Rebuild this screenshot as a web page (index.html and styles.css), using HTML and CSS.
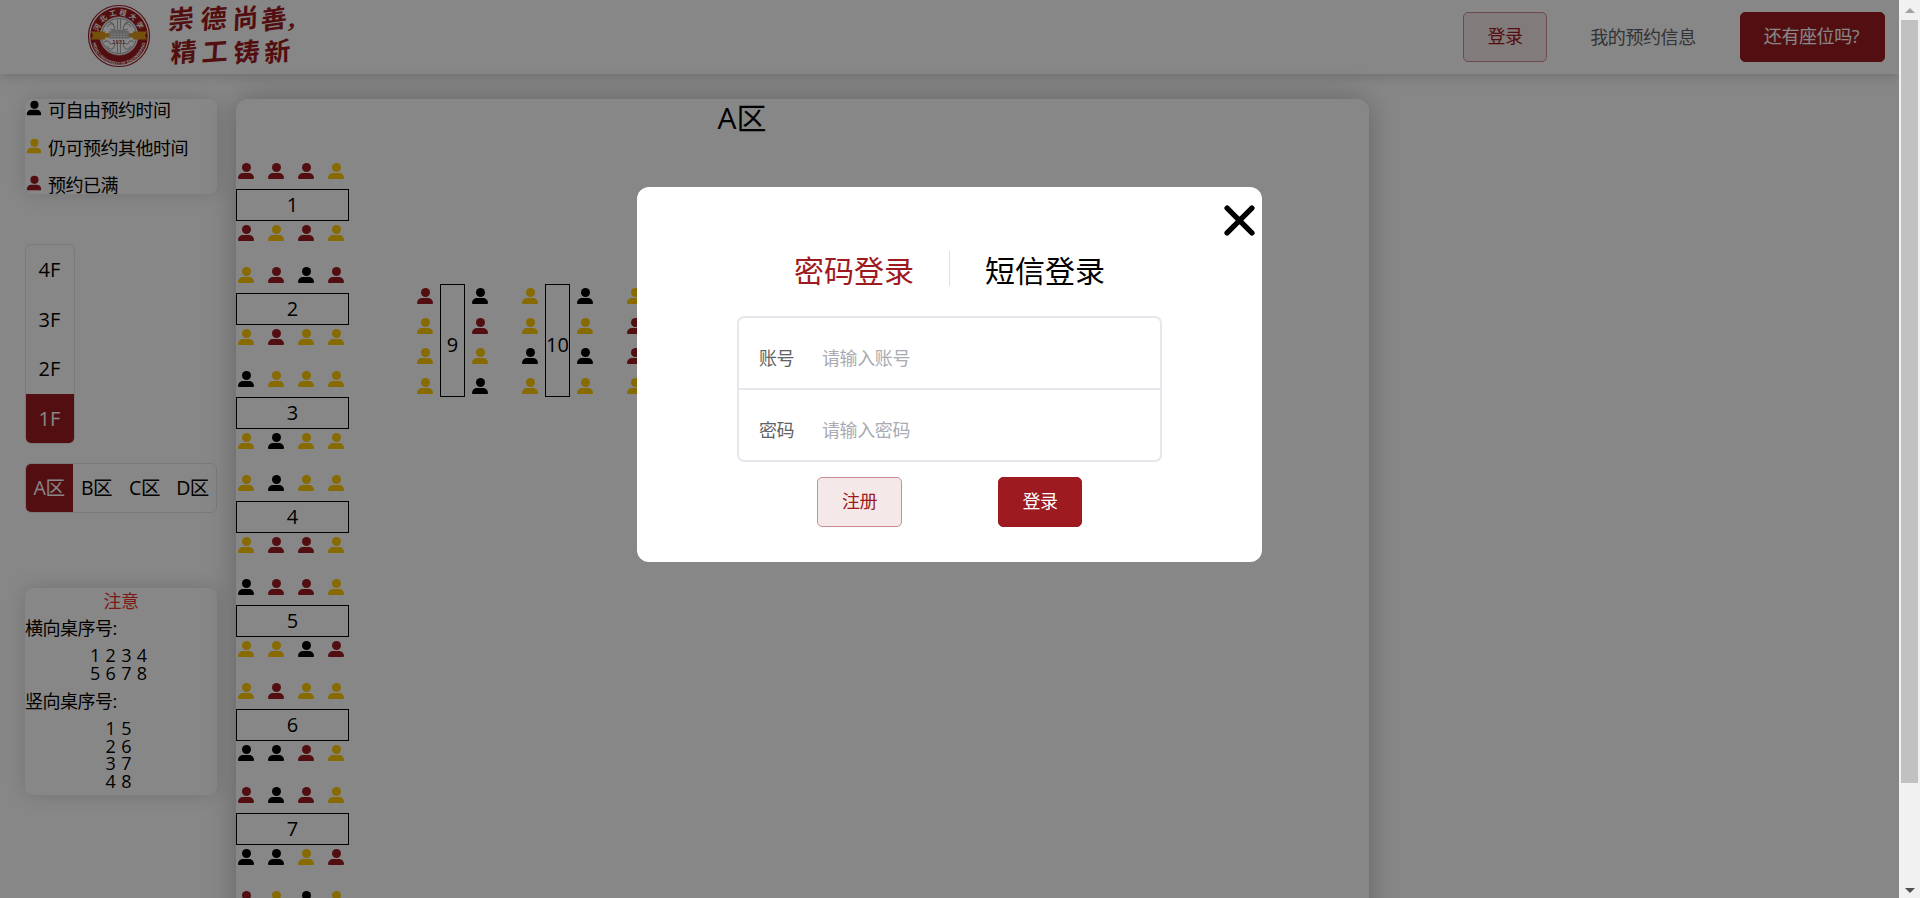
FILE: index.html
```html
<!DOCTYPE html>
<html lang="zh-CN">
<head>
<meta charset="utf-8">
<title>图书馆座位预约</title>
<link rel="stylesheet" href="styles.css">
</head>
<body>
<div class="app">
<div class="page">
  <header class="header">
    <svg class="seal" viewBox="0 0 64 64">
      <defs>
        <path id="arc-top" d="M11 32a21 21 0 0 1 42 0"/>
        <path id="arc-bottom" d="M5.300 34a26.700 26.700 0 0 0 53.400 0"/>
      </defs>
      <circle cx="32" cy="32" r="30.500" fill="#fff" stroke="#9d1b20" stroke-width="1.200"/>
      <circle cx="32" cy="32" r="28.800" fill="#9d1b20"/>
      <circle cx="32" cy="32" r="19" fill="#fff" stroke="#ddd" stroke-width=".8"/>
      <g fill="none" stroke="#aaa" stroke-width="1.100">
        <circle cx="32" cy="32" r="17.500"/>
        <path d="M30.500 15v10M33.500 15v10M30.500 40v9M33.500 40v9M20 23q4-6 7-1t-4 3M44 23q-4-6-7-1t4 3M20 42q4 6 7 1t-4-3M44 42q-4 6-7 1t4-3M17 38q5-3 6 2M47 38q-5-3-6 2M22 18q4 0 5 4M42 18q-4 0-5 4"/>
      </g>
      <path d="M4 27.500h14v1.800h28v-1.800h14l-2 4 2 4H46v-2H18v2H4l2-4z" fill="#d9991a"/>
      <path d="M22 27.500q10-4 20 0v7H22z" fill="#bbb"/>
      <path d="M24 30h16M24 32.500h16" stroke="#fff" stroke-width=".8" stroke-dasharray="2 1"/>
      <text x="32" y="39.500" class="seal-year">1931</text>
      <text class="seal-cn"><textPath href="#arc-top" startOffset="50%">河北工程大学</textPath></text>
      <text class="seal-en"><textPath href="#arc-bottom" startOffset="50%">HEBEI UNIVERSITY OF ENGINEERING</textPath></text>
    </svg>
    <svg class="motto" viewBox="0 0 140 74">
      <g transform="skewX(-8)">
        <text transform="translate(7 30) rotate(-6)">崇</text>
        <text transform="translate(39 29) rotate(-4)">德</text>
        <text transform="translate(71 29) rotate(-6)">尚</text>
        <text transform="translate(100 30) rotate(-8)">善</text>
        <text x="127" y="27">,</text>
        <text transform="translate(14 63) rotate(-6)">精</text>
        <text transform="translate(45 62) rotate(-4)">工</text>
        <text transform="translate(77 63) rotate(-6)">铸</text>
        <text transform="translate(108 63) rotate(-8)">新</text>
      </g>
    </svg>
    <nav class="nav">
      <a class="btn plain">登录</a>
      <a class="link">我的预约信息</a>
      <a class="btn solid">还有座位吗?</a>
    </nav>
  </header>
  <div class="content">
    <aside class="side">
      <div class="card legend">
        <div><i class="seat b"></i>可自由预约时间</div>
        <div><i class="seat y"></i>仍可预约其他时间</div>
        <div><i class="seat r"></i>预约已满</div>
      </div>
      <div class="floors"><a>4F</a><a>3F</a><a>2F</a><a class="on">1F</a></div>
      <div class="areas"><a class="on">A区</a><a>B区</a><a>C区</a><a>D区</a></div>
      <div class="card notice">
        <h4>注意</h4>
        <p>横向桌序号:</p>
        <div class="nums">1 2 3 4<br>5 6 7 8</div>
        <p>竖向桌序号:</p>
        <div class="nums">1 5<br>2 6<br>3 7<br>4 8</div>
      </div>
    </aside>
    <main class="map">
      <h2>A区</h2>
      <div class="tables">
        <div class="across">
          <section class="desk"><div class="row"><i class="seat r"></i><i class="seat r"></i><i class="seat r"></i><i class="seat y"></i></div><b>1</b><div class="row"><i class="seat r"></i><i class="seat y"></i><i class="seat r"></i><i class="seat y"></i></div></section>
          <section class="desk"><div class="row"><i class="seat y"></i><i class="seat r"></i><i class="seat b"></i><i class="seat r"></i></div><b>2</b><div class="row"><i class="seat y"></i><i class="seat r"></i><i class="seat y"></i><i class="seat y"></i></div></section>
          <section class="desk"><div class="row"><i class="seat b"></i><i class="seat y"></i><i class="seat y"></i><i class="seat y"></i></div><b>3</b><div class="row"><i class="seat y"></i><i class="seat b"></i><i class="seat y"></i><i class="seat y"></i></div></section>
          <section class="desk"><div class="row"><i class="seat y"></i><i class="seat b"></i><i class="seat y"></i><i class="seat y"></i></div><b>4</b><div class="row"><i class="seat y"></i><i class="seat r"></i><i class="seat r"></i><i class="seat y"></i></div></section>
          <section class="desk"><div class="row"><i class="seat b"></i><i class="seat r"></i><i class="seat r"></i><i class="seat y"></i></div><b>5</b><div class="row"><i class="seat y"></i><i class="seat y"></i><i class="seat b"></i><i class="seat r"></i></div></section>
          <section class="desk"><div class="row"><i class="seat y"></i><i class="seat r"></i><i class="seat y"></i><i class="seat y"></i></div><b>6</b><div class="row"><i class="seat b"></i><i class="seat b"></i><i class="seat r"></i><i class="seat y"></i></div></section>
          <section class="desk"><div class="row"><i class="seat r"></i><i class="seat b"></i><i class="seat r"></i><i class="seat y"></i></div><b>7</b><div class="row"><i class="seat b"></i><i class="seat b"></i><i class="seat y"></i><i class="seat r"></i></div></section>
          <section class="desk"><div class="row"><i class="seat r"></i><i class="seat y"></i><i class="seat b"></i><i class="seat y"></i></div></section>
        </div>
        <div class="down">
          <section class="desk"><div class="row"><i class="seat r"></i><i class="seat y"></i><i class="seat y"></i><i class="seat y"></i></div><b>9</b><div class="row"><i class="seat b"></i><i class="seat r"></i><i class="seat y"></i><i class="seat b"></i></div></section>
          <section class="desk"><div class="row"><i class="seat y"></i><i class="seat y"></i><i class="seat b"></i><i class="seat y"></i></div><b>10</b><div class="row"><i class="seat b"></i><i class="seat y"></i><i class="seat b"></i><i class="seat y"></i></div></section>
          <section class="desk"><div class="row"><i class="seat y"></i><i class="seat r"></i><i class="seat r"></i><i class="seat y"></i></div></section>
        </div>
      </div>
    </main>
  </div>
  <div class="mask">
    <div class="dialog">
      <svg class="close" viewBox="0 0 30 30"><path d="M3 3l24 24M27 3L3 27"/></svg>
      <div class="tabs"><span class="on">密码登录</span><i></i><span>短信登录</span></div>
      <div class="form">
        <div class="field"><label>账号</label><span>请输入账号</span></div>
        <div class="field"><label>密码</label><span>请输入密码</span></div>
      </div>
      <div class="actions"><a class="btn plain">注册</a><a class="btn solid">登录</a></div>
    </div>
  </div>
</div>
<div class="scrollbar"><i class="up"></i><div class="thumb"></div><i class="dn"></i></div>
</div>
</body>
</html>
```
FILE: styles.css
```css
* { box-sizing: border-box; }
body { margin: 0; font: 18px/24px "Open Sans", "Noto Sans CJK SC", sans-serif; color: #000; overflow: hidden; }
h2, h4, p { margin: 0; font-weight: 400; }
.app { display: flex; height: 898px; }
.page { position: relative; width: 1899px; height: 898px; overflow: hidden; background: #fff; }
.header { display: flex; align-items: center; height: 74px; padding: 0 14px 0 87px; box-shadow: 0 0 14px rgba(0,0,0,.25); }
.seal { width: 64px; height: 64px; margin-top: -2px; }
.seal text { text-anchor: middle; font-family: "Liberation Sans", "Noto Sans CJK SC", sans-serif; }
.seal .seal-year { font-size: 5px; font-weight: 700; fill: #9d1b20; letter-spacing: .5px; }
.seal .seal-cn { font-size: 7px; font-weight: 700; fill: #fff; letter-spacing: 2.500px; }
.seal .seal-en { font-size: 4px; font-weight: 700; fill: #fff; }
.motto { width: 140px; height: 74px; margin-left: 14px; fill: #9d1b20; font: 700 26px "Liberation Serif", "Noto Sans CJK SC", serif; }
.nav { display: flex; align-items: center; margin-left: auto; letter-spacing: -.4px; }
.btn { height: 50px; padding: 0 22px; border: 1px solid #9d1b20; border-radius: 5px; line-height: 47px; text-align: center; white-space: nowrap; letter-spacing: -.4px; }
.plain { width: 84px; color: #9d1b20; background: #f5e8e9; border-color: #ce8d90; }
.solid { color: #fff; background: #9d1b20; }
.nav .solid { width: 145px; padding: 0 2px 0 0; }
.link { width: 193px; padding-right: 1px; text-align: center; color: #606266; }
.content { display: flex; gap: 19px; padding: 25px 0 0 25px; }
.side { width: 192px; }
.card { border-radius: 8px; background: #fff; box-shadow: 0 0 20px rgba(0,0,0,.16); }
.legend { height: 95px; letter-spacing: -.5px; }
.legend div { display: flex; height: 37.500px; line-height: 23px; white-space: nowrap; }
.legend .seat { margin: 1px 6px 0 1px; transform: scale(.9); }
.seat { position: relative; flex: none; display: block; width: 16px; height: 16px; }
.seat::before { content: ""; display: block; width: 9px; height: 9px; margin: 0 auto; border-radius: 50%; background: currentColor; }
.seat::after { content: ""; display: block; width: 16px; height: 6px; margin-top: 1px; border-radius: 5px 5px 1px 1px; background: currentColor; }
.b { color: #000; }
.r { color: #9d1b20; }
.y { color: #ffc800; }
.floors { width: 50px; height: 200px; margin-top: 50px; border: 1px solid #e4e7ed; border-radius: 6px; overflow: hidden; font-size: 20px; }
.floors a { display: block; height: 49.500px; padding-right: 1px; line-height: 49px; text-align: center; }
.areas { display: grid; grid-template-columns: 47px repeat(3, 48px); height: 50px; margin-top: 19px; border: 1px solid #e4e7ed; border-radius: 6px; overflow: hidden; font-size: 19.500px; line-height: 48px; text-align: center; letter-spacing: -.5px; }
.areas a { margin-left: -1px; }
.floors .on, .areas .on { background: #9d1b20; color: #fff; }
.notice { height: 207px; margin-top: 75px; line-height: 27px; letter-spacing: -.5px; }
.notice h4 { font-size: 18px; color: #f03030; text-align: center; }
.nums { padding: 5px 5px 6px 0; text-align: center; line-height: 17.600px; letter-spacing: 0; word-spacing: .6px; }
.map { width: 1133px; height: 1000px; border-radius: 12px; background: #fff; box-shadow: 0 0 30px rgba(0,0,0,.28); }
.map h2 { width: 1012px; height: 40px; font-size: 30px; line-height: 38px; text-align: center; }
.tables { display: flex; }
.across { width: 181px; padding-top: 24px; }
.across .desk { height: 104px; }
.across .row { display: flex; gap: 14px; height: 26px; padding-left: 2px; }
.across b { display: block; width: 113px; height: 32px; margin-bottom: 4px; border: 1px solid #000; font: 20px/29px "Open Sans", sans-serif; text-align: center; }
.down { display: flex; gap: 34px; padding-top: 145px; }
.down .desk { display: flex; gap: 7px; width: 71px; }
.down .row { display: grid; grid-auto-rows: 30px; padding-top: 4px; }
.down .desk:last-child { width: 16px; }
.down b { width: 25px; height: 113px; border: 1px solid #000; font: 20px/119px "Open Sans", sans-serif; display: flex; justify-content: center; }
.mask { position: absolute; inset: 0; display: flex; justify-content: center; align-items: flex-start; padding-top: 187px; background: rgba(0,0,0,.47); }
.dialog { position: relative; width: 625px; height: 375px; padding-top: 64px; border-radius: 12px; background: #fff; }
.close { position: absolute; right: 7px; top: 18px; width: 31px; height: 31px; stroke: #000; stroke-width: 5.200; stroke-linecap: round; }
.tabs { display: flex; justify-content: center; gap: 35px; height: 65px; font-size: 30px; line-height: 40px; }
.tabs i { width: 1px; height: 35px; background: #dcdfe6; }
.tabs .on { color: #9d1b20; }
.form { width: 425px; height: 146px; margin: 0 auto; border: 2px solid #e6e6ec; border-radius: 7px; }
.field { display: flex; gap: 27px; height: 70px; padding: 28px 20px 0; letter-spacing: -.4px; }
.field + .field { height: 72px; border-top: 2px solid #e6e6ec; padding-top: 28px; }
.field label { width: 36px; color: #606266; white-space: nowrap; }
.field span { color: #a8abb2; }
.actions { display: flex; gap: 96px; justify-content: center; margin-top: 15px; }
.actions .btn { width: 85px; }
.actions .solid { width: 84px; }
.scrollbar { display: flex; flex-direction: column; width: 21px; padding: 7px 2px 5px; background: #f1f1f1; align-items: center; }
.thumb { width: 17px; height: 763px; margin-top: 7px; background: #c1c1c1; }
.up, .dn { border: 5px solid transparent; }
.up { border-top: 0; border-bottom-color: #a3a3a3; margin-top: 1px; }
.dn { border-bottom: 0; border-top-color: #505050; margin-top: auto; }
```
